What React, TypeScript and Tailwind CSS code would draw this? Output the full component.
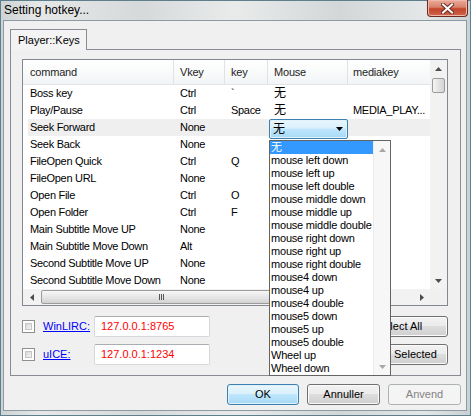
import React from 'react';

type Row = { cmd: string; vkey: string; key?: string; mouse?: string; media?: string; combo?: boolean };

const rows: Row[] = [
  { cmd: 'Boss key', vkey: 'Ctrl', key: '`', mouse: '无' },
  { cmd: 'Play/Pause', vkey: 'Ctrl', key: 'Space', mouse: '无', media: 'MEDIA_PLAY...' },
  { cmd: 'Seek Forward', vkey: 'None', combo: true },
  { cmd: 'Seek Back', vkey: 'None' },
  { cmd: 'FileOpen Quick', vkey: 'Ctrl', key: 'Q' },
  { cmd: 'FileOpen URL', vkey: 'None' },
  { cmd: 'Open File', vkey: 'Ctrl', key: 'O' },
  { cmd: 'Open Folder', vkey: 'Ctrl', key: 'F' },
  { cmd: 'Main Subtitle Move UP', vkey: 'None' },
  { cmd: 'Main Subtitle Move Down', vkey: 'Alt' },
  { cmd: 'Second Subtitle Move UP', vkey: 'None' },
  { cmd: 'Second Subtitle Move Down', vkey: 'None' },
];

const mouseItems = [
  '无',
  'mouse left down',
  'mouse left up',
  'mouse left double',
  'mouse middle down',
  'mouse middle up',
  'mouse middle double',
  'mouse right down',
  'mouse right up',
  'mouse right double',
  'mouse4 down',
  'mouse4 up',
  'mouse4 double',
  'mouse5 down',
  'mouse5 up',
  'mouse5 double',
  'Wheel up',
  'Wheel down',
];

function Arrow({ dir, className }: { dir: 'up' | 'down' | 'left' | 'right'; className?: string }) {
  const vertical = dir === 'up' || dir === 'down';
  const pts = {
    up: '0,4 3.5,0 7,4',
    down: '0,0 7,0 3.5,4',
    left: '4,0 4,7 0,3.5',
    right: '0,0 0,7 4,3.5',
  }[dir];
  return (
    <svg
      width={vertical ? 7 : 4}
      height={vertical ? 4 : 7}
      viewBox={vertical ? '0 0 7 4' : '0 0 4 7'}
      className={className}
    >
      <polygon points={pts} fill="currentColor" />
    </svg>
  );
}

function Checkbox() {
  return (
    <div className="h-[13px] w-[13px] shrink-0 border border-[#8f8f8f] bg-white p-[2px]">
      <div className="h-full w-full border border-[#c5c5c5] bg-[linear-gradient(135deg,#d6d6d6,#f6f6f6)]" />
    </div>
  );
}

function Button({ children, kind = 'normal', className = '' }: { children: React.ReactNode; kind?: 'normal' | 'default' | 'disabled'; className?: string }) {
  const look =
    kind === 'default'
      ? 'border-[#3c7fb1] bg-[linear-gradient(#eaf6fd_0%,#d9f0fc_49%,#bee6fd_50%,#a7d9f5_100%)] text-black shadow-[inset_0_0_0_1px_#dff2fc]'
      : kind === 'disabled'
        ? 'border-[#adb2b5] bg-[#f4f4f4] text-[#838383]'
        : 'border-[#707070] bg-[linear-gradient(#f2f2f2_0%,#ebebeb_49%,#dddddd_50%,#cfcfcf_100%)] text-black shadow-[inset_0_0_0_1px_#fbfbfb]';
  return (
    <div className={`flex h-[21px] items-center justify-center rounded-[3px] border text-[11px] ${look} ${className}`}>
      {children}
    </div>
  );
}

function TextBox({ value }: { value: string }) {
  return (
    <div className="flex h-[21px] w-[116px] items-center rounded-[2px] border border-[#d5d8dd] border-t-[#abadb3] bg-white pl-[6px] text-[11px] text-[#ff0000]">
      {value}
    </div>
  );
}

function MouseCombo() {
  return (
    <>
      <div className="absolute left-[1px] top-0 z-10 flex h-[20px] w-[79px] items-center justify-between rounded-[2px] border border-[#3c7fb1] bg-[linear-gradient(#eaf6fd_0%,#d9f0fc_45%,#bee6fd_50%,#a7d9f5_100%)] pl-[3px] pr-[4px] shadow-[inset_0_0_0_1px_#e3f3fc]">
        <span className="text-[12px] leading-none">无</span>
        <Arrow dir="down" className="text-black" />
      </div>
      <div className="absolute left-[1px] top-[21px] z-20 flex h-[236px] w-[122px] border border-[#646464] bg-white">
        <div className="flex flex-1 flex-col">
          {mouseItems.map((item, i) => (
            <div
              key={item}
              className={`h-[13px] pl-[1px] text-[11px] leading-[13px] tracking-[-0.2px] whitespace-nowrap ${i === 0 ? 'bg-[#3399ff] text-white' : 'text-black'}`}
            >
              {item}
            </div>
          ))}
        </div>
        <div className="flex w-[17px] flex-col justify-between border-l border-[#ececec] bg-[#f7f7f7]">
          <div className="flex h-[17px] items-center justify-center">
            <Arrow dir="up" className="text-[#a8a8a8]" />
          </div>
          <div className="flex h-[17px] items-center justify-center">
            <Arrow dir="down" className="text-[#a8a8a8]" />
          </div>
        </div>
      </div>
    </>
  );
}

function KeyList() {
  return (
    <div className="ml-[11px] mt-[9px] flex h-[247px] w-[426px] flex-col border border-[#828790] bg-white">
      <div className="flex h-[229px]">
        <div className="flex w-[407px] flex-col">
          {/* header */}
          <div className="flex h-[25px] shrink-0 border-b border-[#e5e5e5] bg-[linear-gradient(#ffffff,#f3f4f5)] text-[11px] tracking-[-0.2px] text-[#1e1e1e]">
            <div className="flex w-[151px] items-center border-r border-[#e0e2e5] pl-[7px]">command</div>
            <div className="flex w-[51px] items-center border-r border-[#e0e2e5] pl-[6px]">Vkey</div>
            <div className="flex w-[43px] items-center border-r border-[#e0e2e5] pl-[6px]">key</div>
            <div className="flex w-[80px] items-center border-r border-[#e0e2e5] pl-[6px]">Mouse</div>
            <div className="flex flex-1 items-center pl-[5px]">mediakey</div>
          </div>
          {/* rows */}
          <div className="ml-[5px] flex flex-col">
            {rows.map((r) => (
              <div
                key={r.cmd}
                className={`flex h-[17px] items-center text-[11px] tracking-[-0.3px] text-black ${r.combo ? 'bg-[#efefef]' : ''}`}
              >
                <div className="w-[146px] whitespace-nowrap pl-[2px]">{r.cmd}</div>
                <div className="w-[51px] pl-[6px]">{r.vkey}</div>
                <div className="w-[43px] pl-[6px]">{r.key}</div>
                <div className="relative h-full w-[80px] pl-[6px] leading-[17px]">
                  {r.combo ? <MouseCombo /> : <span className="text-[12px]">{r.mouse}</span>}
                </div>
                <div className="flex-1 overflow-hidden whitespace-nowrap pl-[5px]">{r.media}</div>
              </div>
            ))}
          </div>
        </div>
        {/* vertical scrollbar */}
        <div className="flex w-[17px] flex-col bg-[#f2f2f2]">
          <div className="flex h-[17px] items-center justify-center">
            <Arrow dir="up" className="text-[#4d4d4d]" />
          </div>
          <div className="mx-[2px] mt-[1px] h-[15px] rounded-[2px] border border-[#9b9b9b] bg-[linear-gradient(90deg,#f5f5f5,#e3e3e3_50%,#d4d4d4)]" />
          <div className="flex-1" />
          <div className="flex h-[17px] items-center justify-center">
            <Arrow dir="down" className="text-[#4d4d4d]" />
          </div>
        </div>
      </div>
      {/* horizontal scrollbar */}
      <div className="flex h-[16px]">
        <div className="flex w-[407px] items-center bg-[#f2f2f2]">
          <div className="flex h-full w-[17px] items-center justify-center">
            <Arrow dir="left" className="text-[#4d4d4d]" />
          </div>
          <div className="ml-[1px] flex h-[14px] w-[241px] items-center justify-center rounded-[2px] border border-[#9b9b9b] bg-[linear-gradient(#f7f7f7,#e6e6e6_50%,#d2d2d2)]">
            <div className="flex gap-[1px]">
              <div className="h-[6px] w-[1px] bg-[#555]" />
              <div className="h-[6px] w-[1px] bg-[#555]" />
              <div className="h-[6px] w-[1px] bg-[#555]" />
            </div>
          </div>
          <div className="flex-1" />
          <div className="flex h-full w-[17px] items-center justify-center">
            <Arrow dir="right" className="text-[#4d4d4d]" />
          </div>
        </div>
        <div className="flex-1 bg-[#f0f0f0]" />
      </div>
    </div>
  );
}

function RemoteRow({ label, value, button, className = '' }: { label: string; value: string; button: string; className?: string }) {
  return (
    <div className={`flex h-[21px] items-center ${className}`}>
      <div className="ml-[11px]">
        <Checkbox />
      </div>
      <div className="w-[59px] pl-[8px] text-[11px] text-[#0000ff] underline">{label}</div>
      <TextBox value={value} />
      <div className="flex-1" />
      <Button className="mr-[12px] w-[97px]">{button}</Button>
    </div>
  );
}

export default function App() {
  return (
    <div className="relative h-[416px] w-[471px] overflow-hidden bg-[linear-gradient(90deg,#cdd2d4,#e6e8e8_8%,#d6d9da_30%,#e9ebeb_50%,#d3d7d8_72%,#e4e7e7_90%,#c9d0d3)] font-['Liberation_Sans','Noto_Sans_CJK_SC',sans-serif] shadow-[inset_0_0_0_1px_#5e7f8c]">
      {/* title bar */}
      <div className="flex h-[20px] items-start justify-between">
        <div className="pl-[4px] pt-[3px] text-[12px] leading-[14px] text-black">Setting hotkey...</div>
        <div className="mr-[3px] flex h-[17px] w-[41px] items-center justify-center rounded-b-[4px] border border-t-0 border-[#6e2a1f] bg-[linear-gradient(#ebab9c,#d8826c_45%,#c1452b_55%,#d0654b)] shadow-[inset_0_0_0_1px_#f0b8aa]">
          <svg width="13" height="11" viewBox="0 0 13 11">
            <path d="M2 1.5 L11 9.5 M11 1.5 L2 9.5" stroke="#6b2a20" strokeWidth="4" strokeLinecap="square" />
            <path d="M2 1.5 L11 9.5 M11 1.5 L2 9.5" stroke="#ffffff" strokeWidth="2" strokeLinecap="square" />
          </svg>
        </div>
      </div>

      {/* client area */}
      <div className="ml-[3px] flex h-[391px] w-[464px] flex-col border border-[#8e9aa3] bg-[#f0f0f0]">
        {/* tab strip */}
        <div className="ml-[6px] mt-[8px] flex">
          <div className="relative z-10 -mb-px flex h-[21px] w-[77px] items-center border border-b-0 border-[#898c95] bg-[#f3f3f3] pl-[7px] text-[11px] text-black">
            Player::Keys
          </div>
        </div>

        {/* tab page */}
        <div className="ml-[6px] flex h-[327px] w-[451px] flex-col border border-[#898c95] bg-[#f0f0f0]">
          <KeyList />
          <RemoteRow className="mt-[10px]" label="WinLIRC:" value="127.0.0.1:8765" button="Select All" />
          <RemoteRow className="mt-[7px]" label="uICE:" value="127.0.0.1:1234" button="Reset Selected" />
        </div>

        {/* dialog buttons */}
        <div className="mt-[8px] flex justify-end gap-[8px] pr-[5px]">
          <Button kind="default" className="w-[72px]">OK</Button>
          <Button className="w-[73px]">Annuller</Button>
          <Button kind="disabled" className="w-[73px]">Anvend</Button>
        </div>
      </div>
    </div>
  );
}
